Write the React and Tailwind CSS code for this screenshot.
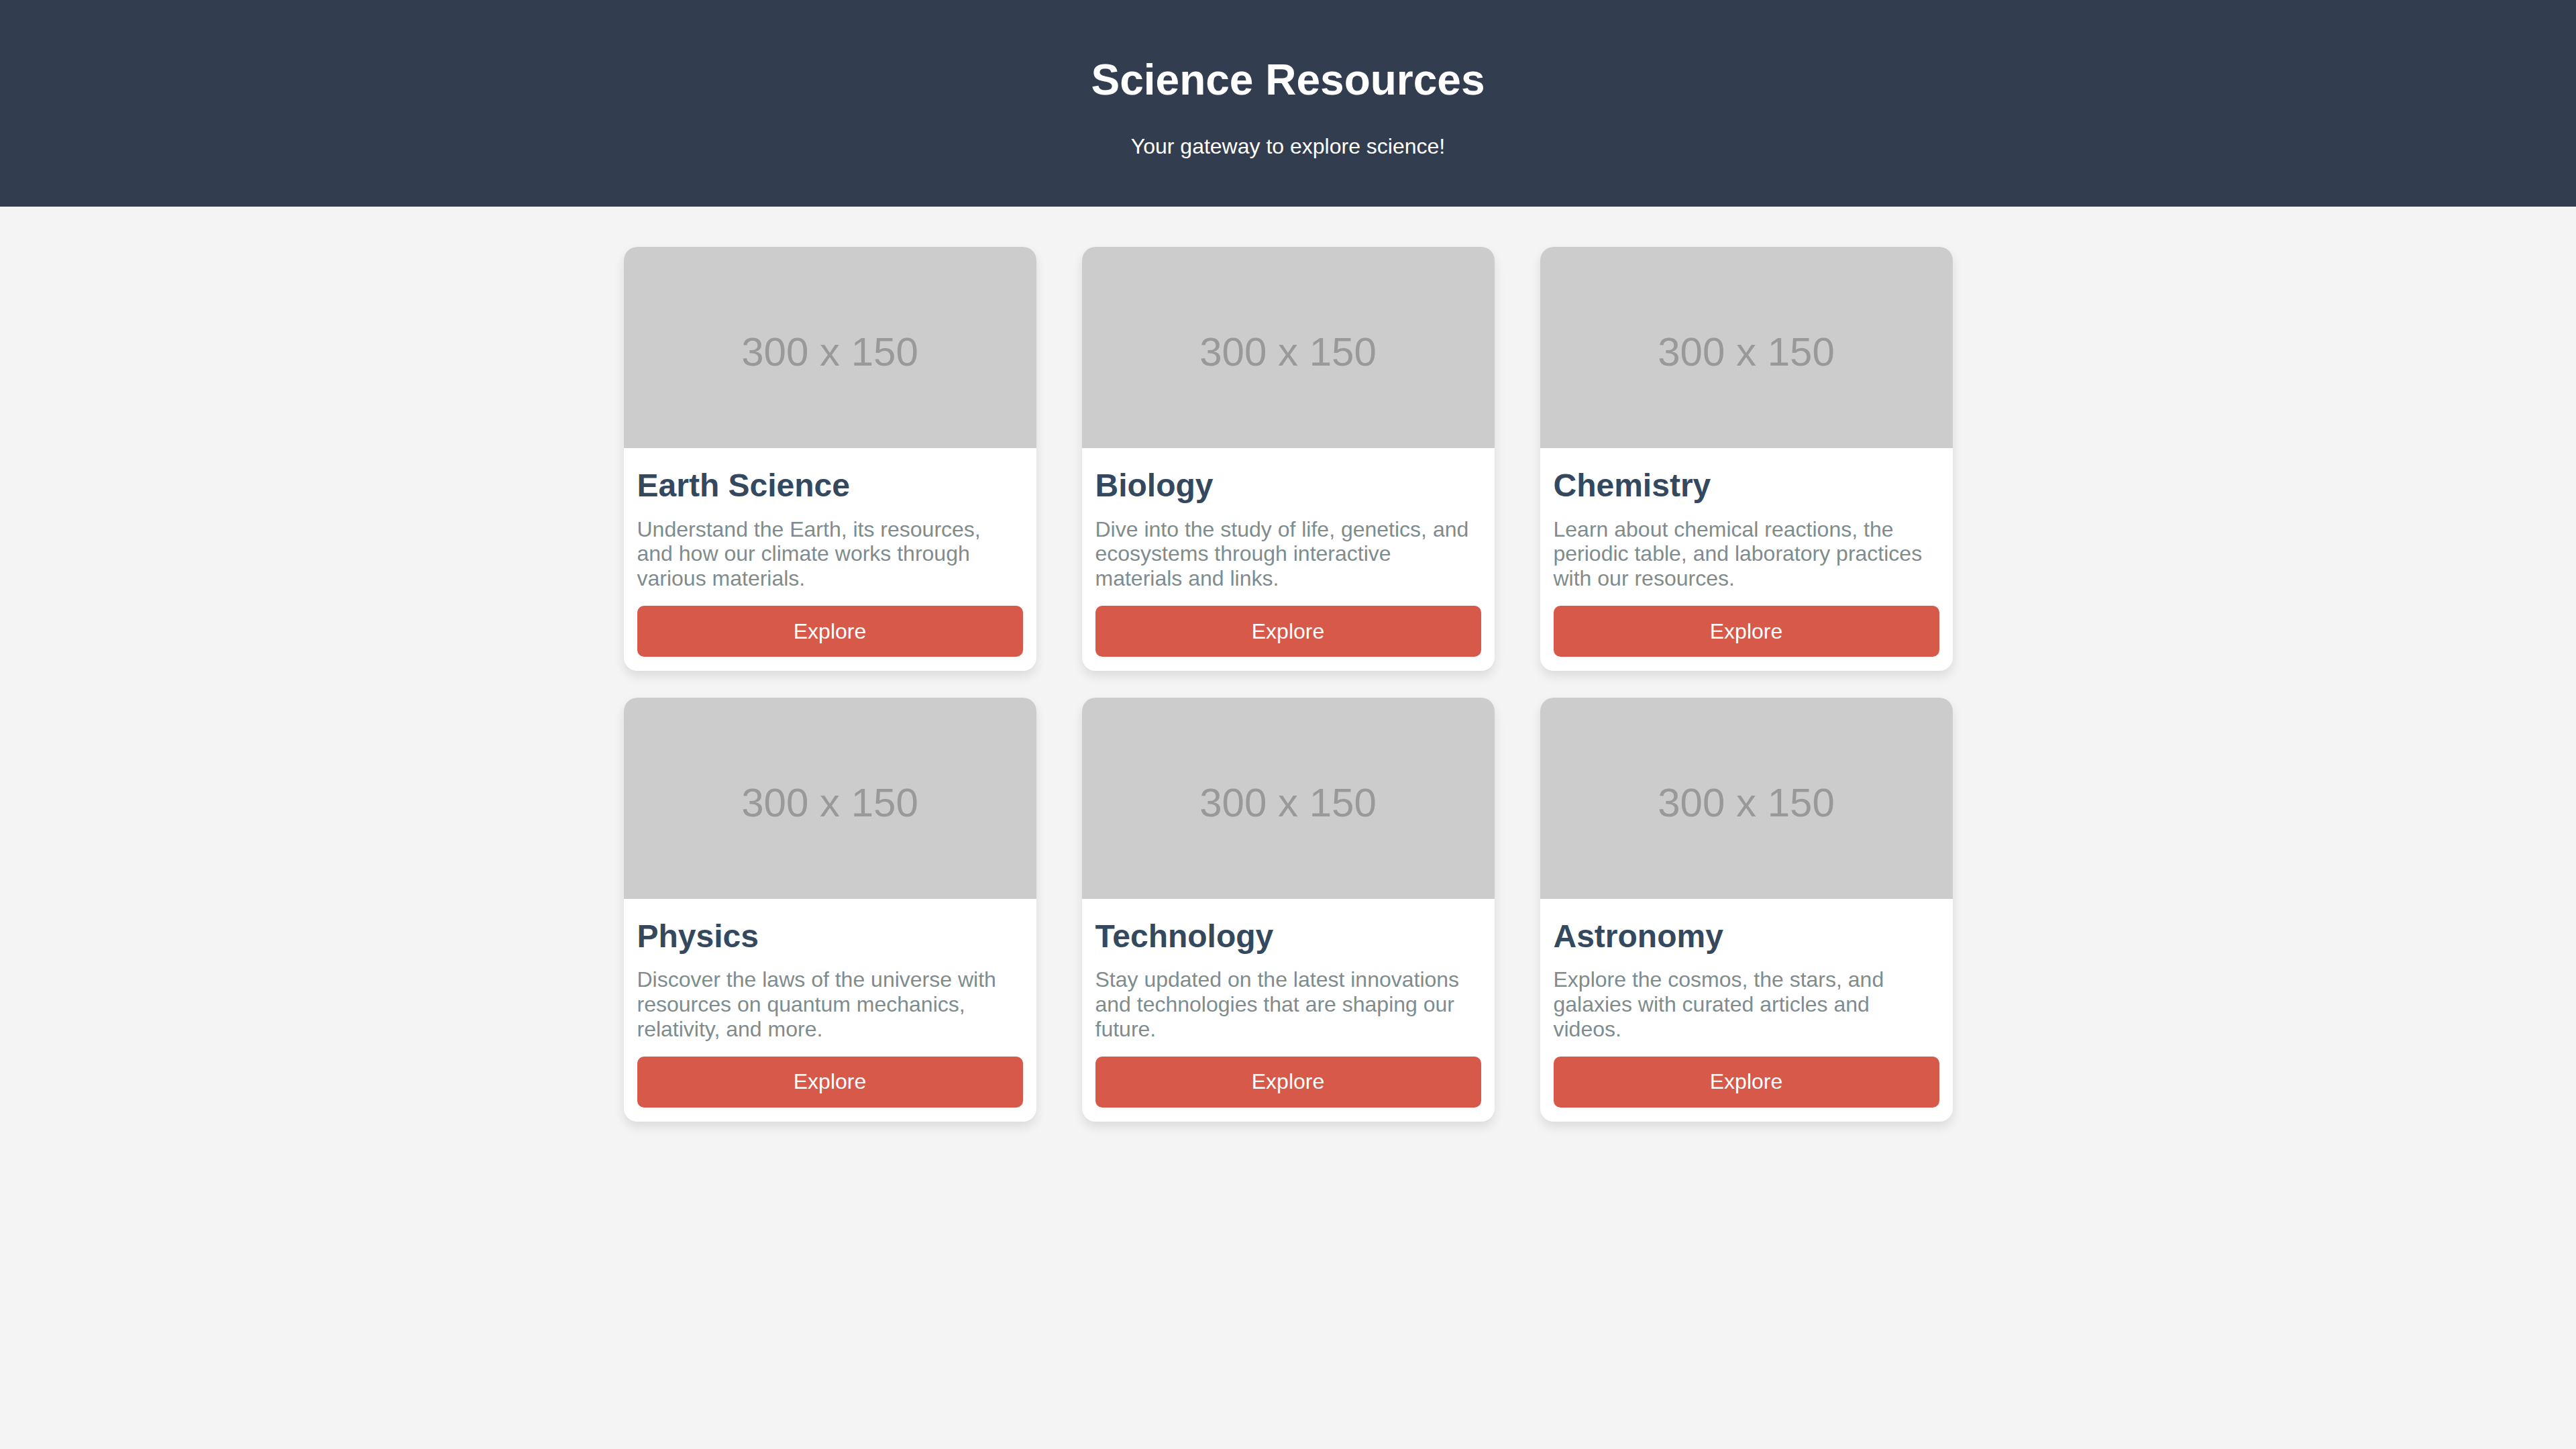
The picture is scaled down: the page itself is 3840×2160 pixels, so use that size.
import React from 'react';

const subjects = [
  {
    title: 'Earth Science',
    text: 'Understand the Earth, its resources, and how our climate works through various materials.',
  },
  {
    title: 'Biology',
    text: 'Dive into the study of life, genetics, and ecosystems through interactive materials and links.',
  },
  {
    title: 'Chemistry',
    text: 'Learn about chemical reactions, the periodic table, and laboratory practices with our resources.',
  },
  {
    title: 'Physics',
    text: 'Discover the laws of the universe with resources on quantum mechanics, relativity, and more.',
  },
  {
    title: 'Technology',
    text: 'Stay updated on the latest innovations and technologies that are shaping our future.',
  },
  {
    title: 'Astronomy',
    text: 'Explore the cosmos, the stars, and galaxies with curated articles and videos.',
  },
];

const ResourceCard = ({ title, text }) => (
  <div className="bg-white rounded-[20px] overflow-hidden shadow-[0_8px_16px_rgba(0,0,0,0.1)]">
    {/* Placeholder image */}
    <div className="h-[300px] bg-[#cccccc] flex items-center justify-center">
      <span className="mt-[14px] text-[60px] leading-none text-[#999999]">300 x 150</span>
    </div>

    <div className="px-[20px] pt-[28px] pb-[21px]">
      <h3 className="text-[48px] leading-[1.15] font-bold text-[#34495e]">{title}</h3>
      <p className="mt-[19px] pr-[12px] text-[32px] leading-[1.15] text-[#7f8c8d]">{text}</p>
      <button className="mt-[22px] w-full h-[76px] rounded-[10px] bg-[#d6594a] text-white text-[32px] leading-[1.15]">
        Explore
      </button>
    </div>
  </div>
);

const App = () => {
  return (
    <div className="min-h-screen bg-[#f4f4f4] font-['Liberation_Sans',Arial,sans-serif]">
      {/* Header */}
      <header className="bg-[#323e50] text-white text-center pt-[40px] pb-[40px]">
        <h1 className="mt-[43px] text-[64px] leading-[1.15] font-bold">Science Resources</h1>
        <p className="mt-[43px] mb-[32px] text-[32px] leading-[1.15]">Your gateway to explore science!</p>
      </header>

      {/* Cards */}
      <main className="pt-[60px] pb-[60px] flex justify-center">
        <div className="grid grid-cols-[repeat(3,615px)] gap-x-[68px] gap-y-[40px]">
          {subjects.map((s) => (
            <ResourceCard key={s.title} title={s.title} text={s.text} />
          ))}
        </div>
      </main>
    </div>
  );
};

export default App;
